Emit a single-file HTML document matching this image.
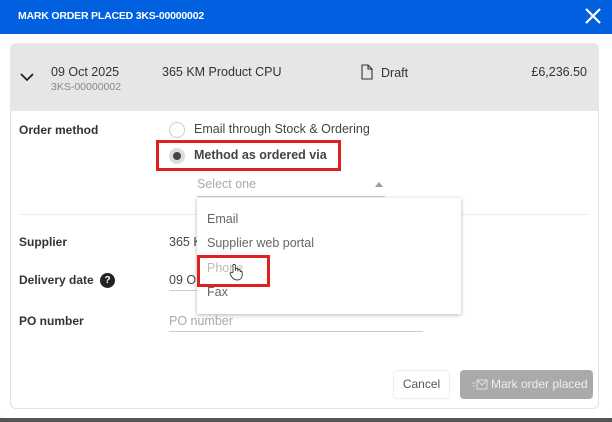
<!DOCTYPE html>
<html><head><meta charset="utf-8"><style>
*{box-sizing:border-box;margin:0;padding:0}
body{width:612px;height:422px;overflow:hidden;background:#f4f4f4;font-family:"Liberation Sans",sans-serif;position:relative;color:#333}
.a{position:absolute;white-space:nowrap}
</style></head><body>
<div class="a" style="left:0;top:0;width:612px;height:34px;background:#0060df"></div>
<div class="a" style="left:18px;top:10px;color:#fff;font-size:10.5px;font-weight:bold;letter-spacing:-0.2px">MARK ORDER PLACED 3KS-00000002</div>
<svg class="a" style="left:584px;top:7px" width="18" height="18" viewBox="0 0 18 18"><path d="M2 2L16 16M16 2L2 16" stroke="#fff" stroke-width="2.2"/></svg>
<div class="a" style="left:0;top:34px;width:612px;height:384px;background:#fff;border-radius:0 0 4px 4px"></div>
<div class="a" style="left:0;top:418px;width:612px;height:4px;background:#555"></div>
<div class="a" style="left:10px;top:43px;width:589px;height:366px;border:1px solid #e2e2e2;border-radius:6px;background:#fff"></div>
<div class="a" style="left:10px;top:43px;width:589px;height:68px;background:#e6e6e6;border-radius:6px 6px 0 0"></div>
<svg class="a" style="left:19px;top:71px" width="16" height="12" viewBox="0 0 16 12"><path d="M2 3L8 9L14 3" stroke="#222" stroke-width="1.8" fill="none"/></svg>
<div class="a" style="left:51px;top:65px;font-size:12.5px;color:#333">09 Oct 2025</div>
<div class="a" style="left:51px;top:81px;font-size:10.5px;color:#888">3KS-00000002</div>
<div class="a" style="left:162px;top:65px;font-size:12.5px;color:#333">365 KM Product CPU</div>
<svg class="a" style="left:361px;top:64px" width="12" height="16" viewBox="0 0 12 16"><path d="M1 1H7L11 5V15H1Z M7 1V5H11" stroke="#333" stroke-width="1.1" fill="none"/></svg>
<div class="a" style="left:381px;top:66px;font-size:12.5px;color:#333">Draft</div>
<div class="a" style="right:25px;top:65px;font-size:12.5px;color:#333">£6,236.50</div>

<div class="a" style="left:19px;top:123px;font-size:12px;font-weight:bold;color:#333">Order method</div>
<div class="a" style="left:169px;top:122px;width:16px;height:16px;border:1px solid #ccc;border-radius:50%"></div>
<div class="a" style="left:194px;top:122px;font-size:12.5px;color:#444">Email through Stock &amp; Ordering</div>
<div class="a" style="left:169px;top:148px;width:16px;height:16px;border-radius:50%;background:#ddd"></div>
<div class="a" style="left:173px;top:152px;width:8px;height:8px;border-radius:50%;background:#444"></div>
<div class="a" style="left:194px;top:148px;font-size:12.5px;font-weight:bold;color:#444">Method as ordered via</div>
<div class="a" style="left:156px;top:140px;width:185px;height:31px;border:3px solid #e02020"></div>
<div class="a" style="left:197px;top:177px;font-size:12.5px;color:#aaa">Select one</div>
<div class="a" style="left:375px;top:182px;width:0;height:0;border-left:4px solid transparent;border-right:4px solid transparent;border-bottom:5px solid #999"></div>
<div class="a" style="left:197px;top:196px;width:188px;height:1px;background:#ccc"></div>
<div class="a" style="left:19px;top:214px;width:570px;height:1px;background:#eee"></div>

<div class="a" style="left:19px;top:235px;font-size:12px;font-weight:bold;color:#333">Supplier</div>
<div class="a" style="left:169px;top:235px;font-size:12.5px;color:#444">365 K</div>
<div class="a" style="left:19px;top:273px;font-size:12px;font-weight:bold;color:#333">Delivery date</div>
<div class="a" style="left:100px;top:273px;width:15px;height:15px;border-radius:50%;background:#222;color:#fff;font-size:10px;font-weight:bold;text-align:center;line-height:15px">?</div>
<div class="a" style="left:169px;top:273px;font-size:12.5px;color:#444">09 O</div>
<div class="a" style="left:169px;top:290px;width:30px;height:1px;background:#ccc"></div>
<div class="a" style="left:19px;top:314px;font-size:12px;font-weight:bold;color:#333">PO number</div>
<div class="a" style="left:169px;top:314px;font-size:12.5px;color:#aaa">PO number</div>
<div class="a" style="left:169px;top:331px;width:254px;height:1px;background:#ccc"></div>

<div class="a" style="left:197px;top:198px;width:264px;height:116px;background:#fff;box-shadow:0 1px 4px rgba(0,0,0,.3)"></div>
<div class="a" style="left:207px;top:212px;font-size:12.5px;color:#666">Email</div>
<div class="a" style="left:207px;top:236px;font-size:12.5px;color:#666">Supplier web portal</div>
<div class="a" style="left:207px;top:261px;font-size:12.5px;color:#bbb">Phone</div>
<div class="a" style="left:207px;top:285px;font-size:12.5px;color:#666">Fax</div>
<div class="a" style="left:197px;top:255px;width:73px;height:32px;border:3px solid #e02020"></div>
<svg class="a" style="left:229px;top:263px" width="14" height="18" viewBox="0 0 14 18"><path d="M4 9V2.5a1.2 1.2 0 0 1 2.4 0V8V6.5a1.2 1.2 0 0 1 2.4 0V8.5V7.5a1.2 1.2 0 0 1 2.4 0V9a1.1 1.1 0 0 1 2 0V12c0 3-2 5-4.5 5S4 16 2.5 13.5L1 11a1.2 1.2 0 0 1 2-1.2Z" fill="#fff" stroke="#333" stroke-width="0.9"/></svg>

<div class="a" style="left:393px;top:370px;width:57px;height:29px;border:1px solid #eee;border-radius:4px;font-size:12px;color:#555;text-align:center;line-height:27px">Cancel</div>
<div class="a" style="left:460px;top:370px;width:133px;height:29px;background:#aaa;border-radius:4px;font-size:12px;color:#eee;line-height:29px;padding-left:31px">Mark order placed</div>
<svg class="a" style="left:472px;top:379px" width="16" height="11" viewBox="0 0 16 11"><path d="M5 1H15V10H5Z M5 1L10 6L15 1 M0 4H3 M1 7H3" stroke="#ddd" stroke-width="1" fill="none"/></svg>
</body></html>
